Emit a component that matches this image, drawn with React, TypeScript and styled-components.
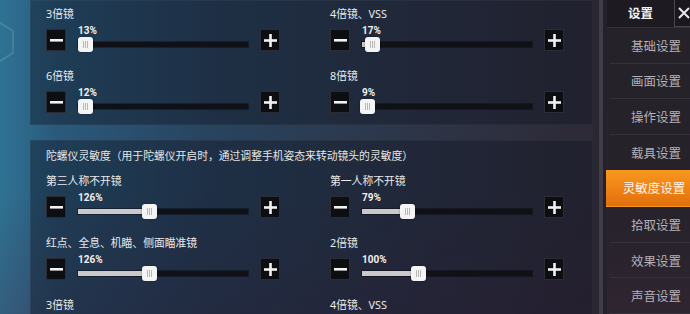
import React from "react";
import styled, { createGlobalStyle } from "styled-components";

const GlobalStyle = createGlobalStyle`
  html, body {
    margin: 0;
    padding: 0;
    background: #1d1b22;
    overflow: hidden;
  }
  * {
    box-sizing: border-box;
  }
`;

const Screen = styled.div`
  width: 690px;
  height: 314px;
  display: flex;
  overflow: hidden;
  position: relative;
  font-family: "Noto Sans", "Noto Sans CJK SC", sans-serif;
  color: #e6e6e6;
  background:
    linear-gradient(180deg, rgba(0, 0, 0, 0) 60%, rgba(70, 30, 60, 0.25) 100%),
    linear-gradient(90deg, #2f7394 0%, #2a5a7b 8%, #28445f 30%, #2d3548 60%, #2e2a37 85%, #2a2430 100%);
`;

const Hexagon = styled.svg`
  position: absolute;
  left: -14px;
  top: 22px;
`;

const Main = styled.div`
  flex: 1;
  padding-left: 30px;
  display: flex;
  flex-direction: column;
  gap: 15px;
  min-width: 0;
`;

const Panel = styled.div<{ $pad: number }>`
  background: rgba(16, 22, 36, 0.42);
  border: 1px solid rgba(255, 255, 255, 0.04);
  padding: ${(p) => p.$pad}px 30px 11px 15px;
  flex-shrink: 0;
`;

const Title = styled.div`
  font-size: 10.8px;
  line-height: 14px;
  margin-bottom: 11px;
  white-space: nowrap;
`;

const Grid = styled.div`
  display: grid;
  grid-template-columns: 234px 234px;
  column-gap: 50px;
  row-gap: 18px;
`;

const Setting = styled.div`
  display: flex;
  flex-direction: column;
`;

const Label = styled.div`
  font-size: 10.8px;
  line-height: 14px;
  margin-bottom: 8px;
  white-space: nowrap;
  color: #eaeaea;
`;

const Controls = styled.div`
  display: flex;
  align-items: flex-start;
  height: 22px;
`;

const StepButton = styled.div`
  width: 20px;
  height: 22px;
  background: #0d0e12;
  border: 1px solid rgba(150, 160, 175, 0.22);
  display: flex;
  align-items: center;
  justify-content: center;
  flex-shrink: 0;
`;

const SliderArea = styled.div`
  flex: 1;
  margin: 0 12px 0 12px;
  display: flex;
  flex-direction: column;
`;

const Percent = styled.div`
  font-family: Roboto, "Liberation Sans", sans-serif;
  font-weight: 700;
  font-size: 10px;
  line-height: 12px;
  margin-top: -4px;
  color: #f0f0f0;
`;

const Track = styled.div`
  position: relative;
  height: 5px;
  margin-top: 5px;
  background: #101116;
  box-shadow: 0 0 0 1px rgba(0, 0, 0, 0.35);
`;

const Fill = styled.div`
  height: 100%;
  background: #c9c9cc;
`;

const Thumb = styled.div`
  position: absolute;
  top: -5px;
  width: 15px;
  height: 15px;
  border-radius: 3px;
  background: #f4f4f4;
  box-shadow: 0 0 2px rgba(0, 0, 0, 0.4);
  &::after {
    content: "";
    position: absolute;
    left: 5px;
    top: 4px;
    width: 5px;
    height: 7px;
    background: repeating-linear-gradient(90deg, #b8b8b8 0 1px, transparent 1px 2px);
  }
`;

const Gutter = styled.div`
  width: 14px;
  flex-shrink: 0;
  background: linear-gradient(90deg, #2a2632 0 6px, #413c49 6px 10px, #24212a 10px);
`;

const Sidebar = styled.div`
  width: 83px;
  flex-shrink: 0;
  background: linear-gradient(180deg, #25222a 0%, #27222b 70%, #2f2530 100%);
  display: flex;
  flex-direction: column;
`;

const SideHeader = styled.div`
  height: 28px;
  display: flex;
  background: #1d1b21;
  border-bottom: 1px solid #35313b;
`;

const SideTitle = styled.div`
  flex: 1;
  text-align: center;
  font-size: 12.5px;
  font-weight: 700;
  line-height: 28px;
  color: #f2f2f2;
`;

const CloseBox = styled.div`
  width: 22px;
  flex-shrink: 0;
  margin-right: -6px;
  border: 1px solid #4a4650;
  border-top: none;
  background: #1a181e;
  display: flex;
  align-items: center;
  padding-left: 3px;
`;

const SideItem = styled.div<{ $active?: boolean }>`
  height: 36.7px;
  display: flex;
  align-items: center;
  justify-content: center;
  padding-left: 12px;
  font-size: 12.5px;
  white-space: nowrap;
  color: ${(p) => (p.$active ? "#fff6ea" : "#b4b1b8")};
  border-bottom: 1px solid ${(p) => (p.$active ? "transparent" : "#36323c")};
  margin-left: ${(p) => (p.$active ? "-1px" : "3px")};
  background: ${(p) =>
    p.$active ? "linear-gradient(180deg, #f8981f 0%, #ef8316 50%, #e0700c 100%)" : "transparent"};
  ${(p) => (p.$active ? "margin-top: -1px; height: 38.7px;" : "")}
`;

const MinusIcon = () => (
  <svg width="13" height="3" viewBox="0 0 13 3">
    <rect width="13" height="2.6" fill="#f2f2f2" />
  </svg>
);

const PlusIcon = () => (
  <svg width="13" height="13" viewBox="0 0 13 13">
    <rect x="0" y="5.2" width="13" height="2.6" fill="#f2f2f2" />
    <rect x="5.2" y="0" width="2.6" height="13" fill="#f2f2f2" />
  </svg>
);

const MAX = 300;
const TRACK_W = 169;

interface SliderProps {
  label: string;
  value?: number;
}

const SliderSetting = ({ label, value }: SliderProps) => {
  if (value === undefined) {
    // row below the visible area: only its label shows
    return (
      <Setting>
        <Label>{label}</Label>
      </Setting>
    );
  }
  const filled = (value / MAX) * TRACK_W;
  return (
    <Setting>
      <Label>{label}</Label>
      <Controls>
        <StepButton>
          <MinusIcon />
        </StepButton>
        <SliderArea>
          <Percent>{value}%</Percent>
          <Track>
            <Fill style={{ width: filled }} />
            <Thumb style={{ left: filled - 7 }} />
          </Track>
        </SliderArea>
        <StepButton>
          <PlusIcon />
        </StepButton>
      </Controls>
    </Setting>
  );
};

const scopes = [
  { label: "3倍镜", value: 13 },
  { label: "4倍镜、VSS", value: 17 },
  { label: "6倍镜", value: 12 },
  { label: "8倍镜", value: 9 },
];

const gyro: SliderProps[] = [
  { label: "第三人称不开镜", value: 126 },
  { label: "第一人称不开镜", value: 79 },
  { label: "红点、全息、机瞄、侧面瞄准镜", value: 126 },
  { label: "2倍镜", value: 100 },
  { label: "3倍镜" },
  { label: "4倍镜、VSS" },
];

const menu = ["基础设置", "画面设置", "操作设置", "载具设置", "灵敏度设置", "拾取设置", "效果设置", "声音设置"];

export default function App() {
  return (
    <>
      <GlobalStyle />
      <Screen>
        <Hexagon width="28" height="40" viewBox="0 0 28 40">
          <polygon
            points="14,1 27,9 27,31 14,39 1,31 1,9"
            fill="none"
            stroke="rgba(160,200,220,0.25)"
            strokeWidth="1.5"
          />
        </Hexagon>
        <Main>
          <Panel $pad={6}>
            <Grid>
              {scopes.map((s, i) => (
                <SliderSetting key={i} label={s.label} value={s.value} />
              ))}
            </Grid>
          </Panel>
          <Panel $pad={8}>
            <Title>陀螺仪灵敏度（用于陀螺仪开启时，通过调整手机姿态来转动镜头的灵敏度）</Title>
            <Grid>
              {gyro.map((s, i) => (
                <SliderSetting key={i} label={s.label} value={s.value} />
              ))}
            </Grid>
          </Panel>
        </Main>
        <Gutter />
        <Sidebar>
          <SideHeader>
            <SideTitle>设置</SideTitle>
            <CloseBox>
              <svg width="12" height="12" viewBox="0 0 12 12">
                <path d="M1 1 L11 11 M11 1 L1 11" stroke="#e8e8e8" strokeWidth="2" />
              </svg>
            </CloseBox>
          </SideHeader>
          {menu.map((m, i) => (
            <SideItem key={m} $active={i === 4}>
              {m}
            </SideItem>
          ))}
        </Sidebar>
      </Screen>
    </>
  );
}
